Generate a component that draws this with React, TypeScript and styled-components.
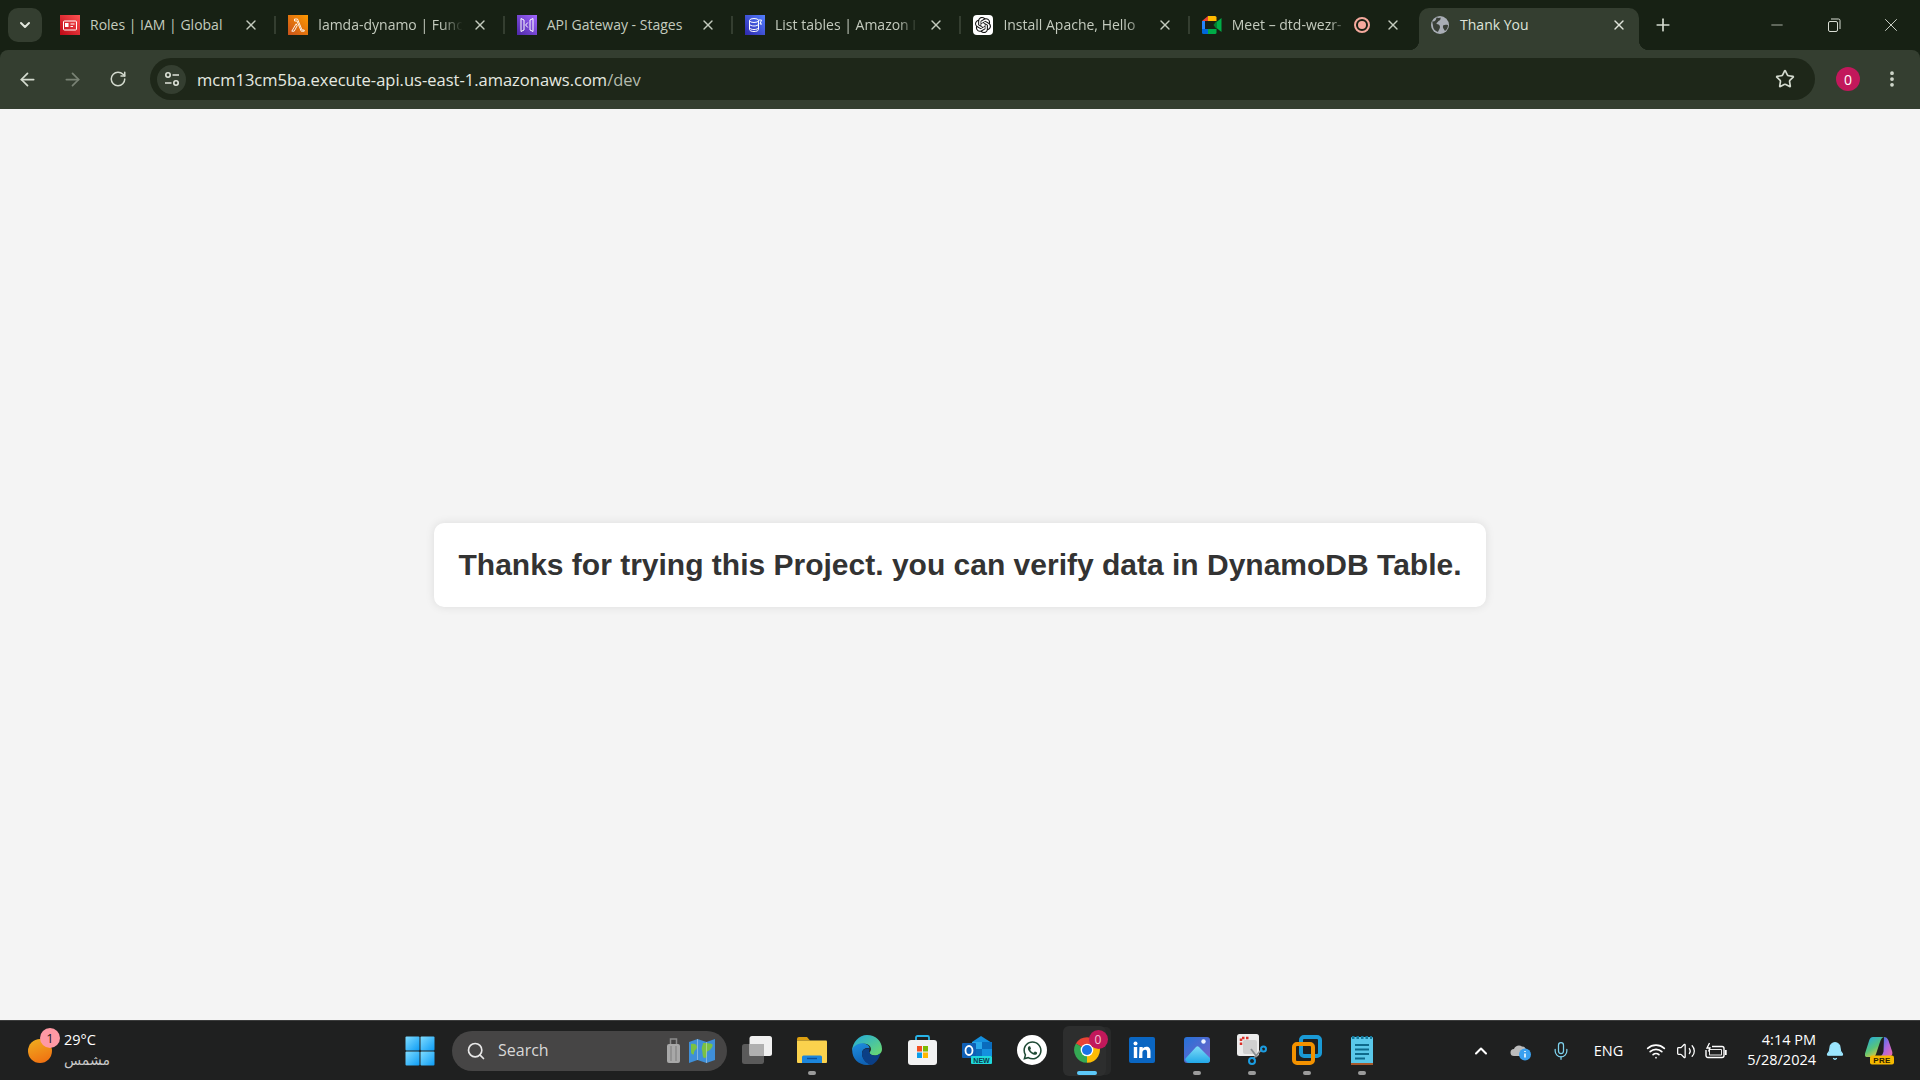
import React from "react";
import styled, { createGlobalStyle } from "styled-components";
import {
  ArrowLeft,
  ArrowRight,
  RotateCw,
  Star,
  EllipsisVertical,
  X,
  Plus,
  Minus,
  ChevronDown,
  ChevronUp,
  Search,
  Mic,
  Wifi,
  Volume2,
  Bell,
} from "lucide-react";
import { SiOpenai } from "react-icons/si";
import { FaWhatsapp } from "react-icons/fa";

const GlobalStyle = createGlobalStyle`
  html, body {
    margin: 0;
    padding: 0;
    background: #f4f4f4;
  }
  * {
    box-sizing: border-box;
  }
`;

const uiFont = `"Open Sans", "Noto Sans", "DejaVu Sans", sans-serif`;

const Screen = styled.div`
  width: 1920px;
  height: 1080px;
  display: flex;
  flex-direction: column;
  overflow: hidden;
  background: #172114;
  font-family: ${uiFont};
`;

const TabStrip = styled.div`
  height: 50px;
  flex: none;
  display: flex;
  background: #172114;
  padding: 8px 0 0 8px;
`;

const TabSearch = styled.div`
  width: 34px;
  height: 34px;
  margin-right: 6px;
  border-radius: 10px;
  background: #343e30;
  color: #e2e7dd;
  display: flex;
  align-items: center;
  justify-content: center;
`;

const Tab = styled.div<{ $active?: boolean }>`
  position: relative;
  flex: none;
  width: ${(p) => (p.$active ? "220px" : "228.35px")};
  margin-left: ${(p) => (p.$active ? "1px" : "0")};
  height: ${(p) => (p.$active ? "42px" : "34px")};
  padding: ${(p) => (p.$active ? "0 12px 8px 11px" : "0 17px 0 12px")};
  display: flex;
  align-items: center;
  border-radius: 10px 10px 0 0;
  background: ${(p) => (p.$active ? "#343e30" : "transparent")};
  color: ${(p) => (p.$active ? "#dfe4da" : "#c4cbbe")};

  ${(p) =>
    p.$active
      ? `
    &::before, &::after {
      content: "";
      position: absolute;
      bottom: 0;
      width: 10px;
      height: 10px;
    }
    &::before {
      left: -10px;
      background: radial-gradient(circle at 0 0, transparent 10px, #343e30 10.5px);
    }
    &::after {
      right: -10px;
      background: radial-gradient(circle at 100% 0, transparent 10px, #343e30 10.5px);
    }
  `
      : ""}
`;

const TabDivider = styled.span`
  position: absolute;
  right: 0;
  top: 8px;
  width: 2px;
  height: 18px;
  background: #343e30;
`;

const Favicon = styled.span`
  width: 20px;
  height: 20px;
  flex: none;
  display: flex;
  align-items: center;
  justify-content: center;
`;

const TabTitle = styled.span<{ $fade?: boolean }>`
  flex: 1;
  min-width: 0;
  margin-left: 10px;
  font-size: 14px;
  line-height: 20px;
  white-space: nowrap;
  ${(p) =>
    p.$fade
      ? `mask-image: linear-gradient(to right, #000 80%, transparent 94%);`
      : ""}
`;

const RecordDot = styled.span`
  width: 16px;
  height: 16px;
  flex: none;
  margin-right: 15px;
  border-radius: 50%;
  border: 2px solid #f5a99d;
  display: flex;
  align-items: center;
  justify-content: center;
  &::after {
    content: "";
    width: 8px;
    height: 8px;
    border-radius: 50%;
    background: #f5a99d;
  }
`;

const TabClose = styled.span`
  width: 16px;
  height: 16px;
  flex: none;
  display: flex;
  align-items: center;
  justify-content: center;
`;

const NewTab = styled.div`
  width: 24px;
  height: 34px;
  margin-left: 12px;
  color: #d5dbd0;
  display: flex;
  align-items: center;
  justify-content: center;
`;

const WindowControls = styled.div`
  margin-left: auto;
  margin-top: -8px;
  padding-right: 1px;
  height: 50px;
  display: flex;
  color: #d8ddd3;
`;

const WindowButton = styled.div`
  width: 57px;
  display: flex;
  align-items: center;
  justify-content: center;
`;

const Toolbar = styled.div`
  height: 59px;
  flex: none;
  display: flex;
  align-items: center;
  padding: 0 0 1px 5px;
  background: #343e30;
  border-radius: 8px 8px 0 0;
`;

const NavButton = styled.div<{ $dim?: boolean }>`
  width: 45px;
  height: 36px;
  display: flex;
  align-items: center;
  justify-content: center;
  color: ${(p) => (p.$dim ? "#798274" : "#d3dace")};
`;

const Omnibox = styled.div`
  width: 1665px;
  height: 42px;
  margin-left: 10px;
  padding: 0 20px 0 7px;
  display: flex;
  align-items: center;
  border-radius: 21px;
  background: #1e2719;
`;

const SiteInfo = styled.div`
  width: 29px;
  height: 29px;
  flex: none;
  border-radius: 50%;
  background: #343e30;
  color: #dfe4da;
  display: flex;
  align-items: center;
  justify-content: center;
`;

const Url = styled.div`
  flex: 1;
  margin-left: 11px;
  font-size: 16.5px;
  color: #e6eae1;
  white-space: nowrap;
`;

const UrlPath = styled.span`
  color: #b4bbae;
`;

const BookmarkStar = styled.div`
  color: #d3dace;
  display: flex;
`;

const Avatar = styled.div`
  width: 24px;
  height: 24px;
  margin-left: 21px;
  flex: none;
  border-radius: 50%;
  background: #c2185b;
  color: #fff;
  font-size: 14px;
  display: flex;
  align-items: center;
  justify-content: center;
`;

const MenuButton = styled.div`
  width: 24px;
  margin-left: 20px;
  color: #d3dace;
  display: flex;
  justify-content: center;
`;

const Page = styled.main`
  flex: 1;
  display: flex;
  align-items: center;
  justify-content: center;
  background: #f4f4f4;
`;

const Card = styled.div`
  width: 1052px;
  height: 84px;
  display: flex;
  align-items: center;
  justify-content: center;
  border-radius: 10px;
  background: #fff;
  box-shadow: 0 0 10px rgba(0, 0, 0, 0.1);
`;

const Message = styled.h1`
  margin: 0;
  font-family: "Liberation Sans", Arial, sans-serif;
  font-size: 30px;
  font-weight: 700;
  color: #333;
  white-space: nowrap;
`;

const Taskbar = styled.footer`
  height: 60px;
  flex: none;
  display: flex;
  align-items: center;
  background: #1f2020;
  border-top: 1px solid #3b3c3c;
  color: #fff;
`;

const Weather = styled.div`
  width: 405px;
  flex: none;
  padding-left: 28px;
  display: flex;
  align-items: center;
`;

const SunIcon = styled.div`
  position: relative;
  width: 24px;
  height: 24px;
  border-radius: 50%;
  background: linear-gradient(160deg, #f0b020, #f06a10);
`;

const CountBadge = styled.span`
  position: absolute;
  top: -11px;
  right: -8px;
  width: 20px;
  height: 20px;
  border-radius: 50%;
  background: #ff99a4;
  color: #1a1a1a;
  font-size: 13px;
  display: flex;
  align-items: center;
  justify-content: center;
`;

const WeatherText = styled.div`
  margin-left: 12px;
  margin-top: -2px;
  display: flex;
  flex-direction: column;
  font-size: 14.5px;
  line-height: 21px;
`;

const WeatherSub = styled.span`
  color: #c9c9c9;
  font-family: "DejaVu Sans", sans-serif;
  font-size: 14px;
`;

const StartButton = styled.div`
  width: 30px;
  height: 30px;
  flex: none;
  display: flex;
`;

const SearchBox = styled.div`
  width: 275px;
  height: 40px;
  flex: none;
  margin-left: 17px;
  padding: 0 11px 0 14px;
  display: flex;
  align-items: center;
  border-radius: 20px;
  background: #464545;
  color: #e8e8e8;
`;

const SearchLabel = styled.span`
  flex: 1;
  margin-left: 12px;
  padding-bottom: 1px;
  font-size: 16px;
  color: #d8d8d8;
`;

const SearchDeco = styled.div`
  display: flex;
  align-items: center;
  gap: 7px;
`;

const AppRow = styled.div`
  margin-left: 2.5px;
  display: flex;
`;

const AppSlot = styled.div<{ $active?: boolean }>`
  position: relative;
  width: 55px;
  height: 58px;
  flex: none;
  padding-bottom: 2px;
  display: flex;
  align-items: center;
  justify-content: center;
  ${(p) =>
    p.$active
      ? `
    &::before {
      content: "";
      position: absolute;
      left: 3px;
      top: 4px;
      width: 43px;
      height: 50px;
      border-radius: 6px;
      background: #2d2e2e;
      box-shadow: 6px 0 0 -1px #282929;
    }
  `
      : ""}
  & > svg {
    position: relative;
  }
`;

const RunDot = styled.span<{ $active?: boolean }>`
  position: absolute;
  bottom: 5px;
  left: 50%;
  transform: translateX(-50%);
  width: ${(p) => (p.$active ? "20px" : "8px")};
  height: 4px;
  border-radius: 2px;
  background: ${(p) => (p.$active ? "#5cc8f8" : "#9b9b9b")};
`;

const AppBadge = styled.span`
  position: absolute;
  top: 8px;
  left: 29px;
  width: 19px;
  height: 19px;
  border-radius: 50%;
  background: #c2185b;
  color: #f3c3d6;
  font-size: 12px;
  display: flex;
  align-items: center;
  justify-content: center;
`;

const Tray = styled.div`
  margin-left: auto;
  padding-right: 14px;
  display: flex;
  align-items: center;
`;

const TraySlot = styled.div<{ $w: number; $color?: string }>`
  width: ${(p) => p.$w}px;
  flex: none;
  display: flex;
  align-items: center;
  justify-content: center;
  color: ${(p) => p.$color || "#fff"};
`;

const LangLabel = styled.span`
  font-size: 14.5px;
  padding-right: 5px;
`;

const Clock = styled.div`
  width: 85px;
  flex: none;
  margin-top: -2px;
  text-align: right;
  font-size: 14.5px;
  line-height: 20px;
  color: #fff;
  white-space: nowrap;
`;

const square = { display: "block" } as const;

const IamIcon = () => (
  <svg width="20" height="20" viewBox="0 0 20 20" style={square}>
    <defs>
      <linearGradient id="iam" x1="0" y1="1" x2="1" y2="0">
        <stop offset="0" stopColor="#bd0816" />
        <stop offset="1" stopColor="#ff5252" />
      </linearGradient>
    </defs>
    <rect width="20" height="20" fill="url(#iam)" />
    <rect x="3.5" y="6" width="13" height="9" rx="1" fill="none" stroke="#fff" strokeWidth="1" />
    <rect x="5" y="8" width="3.5" height="4" fill="#fff" />
    <path d="M10.5 9h4M10.5 11.5h2.5" stroke="#fff" strokeWidth="1" />
  </svg>
);

const LambdaIcon = () => (
  <svg width="20" height="20" viewBox="0 0 20 20" style={square}>
    <defs>
      <linearGradient id="lam" x1="0" y1="1" x2="1" y2="0">
        <stop offset="0" stopColor="#c8511b" />
        <stop offset="1" stopColor="#ff9900" />
      </linearGradient>
    </defs>
    <rect width="20" height="20" fill="url(#lam)" />
    <path d="M6.5 4h3l4.5 11h2.2v1.2h-3L9 6H6.5zM8.2 8.800l1 1.900-3 5.500H3.800z" fill="none" stroke="#fff" strokeWidth="0.9" />
  </svg>
);

const GatewayIcon = () => (
  <svg width="20" height="20" viewBox="0 0 20 20" style={square}>
    <defs>
      <linearGradient id="gw" x1="0" y1="1" x2="1" y2="0">
        <stop offset="0" stopColor="#4d27a8" />
        <stop offset="1" stopColor="#a166ff" />
      </linearGradient>
    </defs>
    <rect width="20" height="20" fill="url(#gw)" />
    <path d="M4 3.5 7 5v10l-3 1.5zM16 3.5 13 5v10l3 1.5z" fill="none" stroke="#fff" strokeWidth="1" />
    <path d="M10.8 7.5 8.6 10l2.2 2.5" fill="none" stroke="#fff" strokeWidth="1" />
  </svg>
);

const DynamoIcon = () => (
  <svg width="20" height="20" viewBox="0 0 20 20" style={square}>
    <defs>
      <linearGradient id="dyn" x1="0" y1="1" x2="1" y2="0">
        <stop offset="0" stopColor="#2e27ad" />
        <stop offset="1" stopColor="#527fff" />
      </linearGradient>
    </defs>
    <rect width="20" height="20" fill="url(#dyn)" />
    <ellipse cx="9" cy="5.5" rx="4.5" ry="2" fill="none" stroke="#fff" strokeWidth="1" />
    <path d="M4.5 5.5v9c0 1.2 2 2 4.5 2s4.5-.8 4.5-2v-9M4.5 9c0 1.2 2 2 4.5 2s4.5-.8 4.5-2M4.5 12.5c0 1.2 2 2 4.5 2s4.5-.8 4.5-2M13.5 5h3l-1.5 4h2" fill="none" stroke="#fff" strokeWidth="1" />
  </svg>
);

const ChatIcon = () => (
  <svg width="20" height="20" viewBox="0 0 20 20" style={square}>
    <rect width="20" height="20" rx="4" fill="#fff" />
    <foreignObject x="2" y="2" width="16" height="16">
      <SiOpenai size={16} color="#111" style={square} />
    </foreignObject>
  </svg>
);

const MeetIcon = () => (
  <svg width="20" height="20" viewBox="0 0 20 20" style={square}>
    <path d="M0 6 6 1v5H0z" fill="#ea4335" />
    <path d="M6 1h7a1.5 1.5 0 0 1 1.5 1.5V6H6z" fill="#ffba00" />
    <path d="M0 6h3v8H0z" fill="#2684fc" />
    <path d="M0 14h6v5H1.5A1.5 1.5 0 0 1 0 17.5z" fill="#0066da" />
    <path d="M6 14h8.5v3.5A1.5 1.5 0 0 1 13 19H6z" fill="#00ac47" />
    <path d="M14.5 6v8l-3-4z" fill="#00832d" />
    <path d="m14.5 7 5-4v14l-5-4z" fill="#00ac47" />
  </svg>
);

const GlobeIcon = () => (
  <svg width="20" height="20" viewBox="0 0 20 20" style={square}>
    <circle cx="10" cy="10" r="9" fill="#a9aeb6" />
    <path d="M3 6.5c2 0 3-1.5 3.5-4 2 .5 3 .5 4 0 .5 1.5-.5 3-2 3.5-1 1.5-2 1.500-2 3 2 0 3.500 1 3.500 3s-1.500 3-2 5c-3-1-5-3-5-6 0-2-1-3-.5-5zM13 10.500c1.500-1 3-1 5-.5 0 2.500-1 4.500-3 6-1-2-2.500-3-2-5.500z" fill="#3a4038" />
  </svg>
);

const TuneIcon = () => (
  <svg width="18" height="18" viewBox="0 0 18 18" fill="none" stroke="currentColor" strokeWidth="1.6" style={square}>
    <circle cx="5" cy="5" r="2.2" />
    <path d="M9.5 5H16M2 13h6.5" />
    <circle cx="13" cy="13" r="2.2" />
  </svg>
);

const RestoreIcon = () => (
  <svg width="16" height="16" viewBox="0 0 16 16" fill="none" stroke="currentColor" strokeWidth="1" style={square}>
    <rect x="2.5" y="4.5" width="9" height="10" rx="1.5" />
    <path d="M5 2h7.5A1.5 1.5 0 0 1 14 3.5V12" />
  </svg>
);

const WindowsLogo = () => (
  <svg width="30" height="30" viewBox="0 0 30 30" style={square}>
    <defs>
      <linearGradient id="win" x1="0" y1="0" x2="1" y2="1">
        <stop offset="0" stopColor="#7fdcff" />
        <stop offset="1" stopColor="#0d9cf5" />
      </linearGradient>
    </defs>
    <rect x="0.5" y="0.5" width="14" height="14" rx="1" fill="url(#win)" />
    <rect x="15.5" y="0.5" width="14" height="14" rx="1" fill="url(#win)" />
    <rect x="0.5" y="15.5" width="14" height="14" rx="1" fill="url(#win)" />
    <rect x="15.5" y="15.5" width="14" height="14" rx="1" fill="url(#win)" />
  </svg>
);

const Suitcase = () => (
  <svg width="15" height="27" viewBox="0 0 15 27" style={square}>
    <path d="M4.5 7V2h6v5" fill="none" stroke="#8c8c8c" strokeWidth="1.5" />
    <rect x="1" y="7" width="13" height="19" rx="2" fill="#a8a8a8" />
    <path d="M5 9v15M10 9v15" stroke="#7c7c7c" />
  </svg>
);

const MapIcon = () => (
  <svg width="28" height="26" viewBox="0 0 28 26" style={square}>
    <path d="M1 4 9.5 1l9 3L27 1v21l-8.5 3-9-3L1 25z" fill="#3f8fd8" />
    <path d="M3 6c3-1 6 0 6 3s-3 3-3 6-3 1-3-1zM15 5c3 0 7 0 9 1s-1 6-4 7 0 6-3 7-2-6-3-8 1-5 1-7z" fill="#7ac143" />
    <path d="M9.5 1v21M18.5 4v21" stroke="#e8e8e8" strokeWidth="0.7" opacity="0.6" />
  </svg>
);

const TaskView = () => (
  <svg width="30" height="28" viewBox="0 0 30 28" style={square}>
    <rect x="0" y="8" width="22" height="20" rx="2.5" fill="#5a5a5a" />
    <rect x="7.5" y="0" width="22.5" height="20" rx="2.5" fill="#f0f0f0" />
    <rect x="7.5" y="8" width="14.5" height="12" fill="#b0b0b0" />
  </svg>
);

const FolderIcon = () => (
  <svg width="30" height="26" viewBox="0 0 30 26" style={square}>
    <path d="M0 2a2 2 0 0 1 2-2h8l3 3.5H0z" fill="#dc9f10" />
    <path d="M0 3.5h29a1 1 0 0 1 1 1V25a1 1 0 0 1-1 1H1a1 1 0 0 1-1-1z" fill="#fbd24d" />
    <path d="M5 20a1.5 1.5 0 0 1 1.5-1.5h17A1.5 1.5 0 0 1 25 20v6H5z" fill="#1c86dc" />
    <path d="M10 21.5h10" stroke="#0c4f9a" strokeWidth="1.4" />
  </svg>
);

const EdgeIcon = () => (
  <svg width="30" height="30" viewBox="0 0 30 30" style={square}>
    <defs>
      <linearGradient id="edge1" x1="0" y1="0" x2="0.3" y2="1">
        <stop offset="0" stopColor="#1f8fe0" />
        <stop offset="1" stopColor="#0f63b5" />
      </linearGradient>
      <linearGradient id="edge2" x1="0" y1="0" x2="1" y2="1">
        <stop offset="0" stopColor="#1fa8e0" />
        <stop offset="1" stopColor="#6fdc6a" />
      </linearGradient>
    </defs>
    <path d="M15 0c8.5 0 15 6 15 14 0 4-3 6.5-7 6.5-3 0-5.500-1-5.500-3 2.500-2 2-7-3-8.500-6-1.500-12.500 2-14.500 7C.5 7 7 0 15 0z" fill="url(#edge2)" />
    <path d="M.2 15c0-3 6-8 12-6.500 4 1 5.500 3 5.300 5-4-1.500-7.500 1-7.500 5 0 5 4 9.500 9 11-1.300.3-2.700.5-4 .5C6.500 30 0 23.500.2 15z" fill="url(#edge1)" />
    <path d="M10 19c0-4 3.500-6.500 7.500-5-.2 1.500-.5 2.500-.1 3.500.5 2 3 3 5.600 3 2 0 4-1 5.500-2.500C27 25 22 29.500 19 30c-5-1.500-9-6-9-11z" fill="#0b3f86" />
  </svg>
);

const StoreIcon = () => (
  <svg width="29" height="30" viewBox="0 0 29 30" style={square}>
    <path d="M8 7V2.5A1.5 1.5 0 0 1 9.5 1h10A1.5 1.5 0 0 1 21 2.500V7" fill="none" stroke="#28b4e8" strokeWidth="1.8" />
    <rect x="0" y="5" width="29" height="25" rx="3" fill="#f2f2f2" />
    <rect x="9" y="11" width="5" height="5.5" fill="#f25022" />
    <rect x="15" y="11" width="5" height="5.5" fill="#7fba00" />
    <rect x="9" y="17.5" width="5" height="5.5" fill="#0a9eea" />
    <rect x="15" y="17.5" width="5" height="5.5" fill="#ffb900" />
  </svg>
);

const OutlookIcon = () => (
  <svg width="30" height="28" viewBox="0 0 30 28" style={square}>
    <path d="M10 6 19 0l11 7v13H10z" fill="#1490df" />
    <path d="M10 6h10v7H10z" fill="#28a8ea" />
    <path d="M20 6h10v7H20zM10 13h10v7H10z" fill="#0a6cbd" />
    <rect x="0" y="7" width="14" height="15" rx="1" fill="#0f5fb5" />
    <ellipse cx="7" cy="14.5" rx="3.5" ry="4.5" fill="none" stroke="#fff" strokeWidth="1.8" />
    <rect x="9" y="20" width="21" height="8" rx="1" fill="#1fd8dc" />
    <text x="19.5" y="26.8" textAnchor="middle" fontFamily="Liberation Sans, sans-serif" fontWeight="700" fontSize="7" fill="#0b3a4a">
      NEW
    </text>
  </svg>
);

const WhatsappIcon = () => (
  <svg width="30" height="30" viewBox="0 0 30 30" style={square}>
    <circle cx="15" cy="15" r="15" fill="#fff" />
    <foreignObject x="4.5" y="4.5" width="21" height="21">
      <FaWhatsapp size={21} color="#1f4a35" style={square} />
    </foreignObject>
  </svg>
);

const ChromeIcon = () => (
  <svg width="28" height="28" viewBox="0 0 24 24" style={square}>
    <path d="M12 12 2.47 6.5A11 11 0 0 1 21.53 6.5z" fill="#ea4335" />
    <path d="M12 12 21.53 6.5A11 11 0 0 1 12 23z" fill="#fbbc04" />
    <path d="M12 12V23A11 11 0 0 1 2.47 6.5z" fill="#34a853" />
    <circle cx="12" cy="12" r="5.4" fill="#fff" />
    <circle cx="12" cy="12" r="4.3" fill="#1a73e8" />
  </svg>
);

const LinkedinIcon = () => (
  <svg width="26" height="26" viewBox="0 0 26 26" style={square}>
    <rect width="26" height="26" rx="2" fill="#0a66c2" />
    <circle cx="6.5" cy="6.5" r="2" fill="#fff" />
    <path d="M4.8 10h3.4v11H4.8zM10.5 10h3.2v1.6c.6-1 1.8-1.9 3.5-1.9 3.3 0 4.3 2 4.3 5V21h-3.4v-5.6c0-1.5-.4-2.7-1.9-2.7-1.6 0-2.8 1-2.8 2.9V21h-3.4z" fill="#fff" />
  </svg>
);

const PhotosIcon = () => (
  <svg width="26" height="26" viewBox="0 0 26 26" style={square}>
    <defs>
      <linearGradient id="ph" x1="0" y1="0" x2="1" y2="1">
        <stop offset="0" stopColor="#2472d8" />
        <stop offset="1" stopColor="#7a62c8" />
      </linearGradient>
      <linearGradient id="ph2" x1="0" y1="0" x2="0" y2="1">
        <stop offset="0" stopColor="#7fdcf8" />
        <stop offset="1" stopColor="#22a8e8" />
      </linearGradient>
    </defs>
    <rect width="26" height="26" rx="3" fill="url(#ph)" />
    <circle cx="19.5" cy="4.5" r="2.2" fill="#eef4ff" />
    <path d="M2 24c-1-1-1-2 0-3L12 10c1-1 2-1 3 0l11 11v2a3 3 0 0 1-3 3H5c-1 0-2-1-3-2z" fill="url(#ph2)" />
  </svg>
);

const SnipIcon = () => (
  <svg width="30" height="31" viewBox="0 0 30 31" style={square}>
    <rect x="0" y="0" width="22" height="22" rx="2.5" fill="#ececec" />
    <path d="M4 11V4h8" stroke="#d9302a" strokeWidth="2.5" strokeDasharray="2.5 1.5" fill="none" />
    <rect x="6" y="6" width="14" height="14" rx="2" fill="#d0d0d0" />
    <path d="m14 15 6 8M25 15l-9 10" stroke="#8a8f92" strokeWidth="1.8" />
    <circle cx="26.5" cy="15" r="2.5" fill="none" stroke="#1b9de2" strokeWidth="2" />
    <circle cx="15" cy="27" r="3" fill="none" stroke="#1b9de2" strokeWidth="2" />
  </svg>
);

const VmwareIcon = () => (
  <svg width="30" height="30" viewBox="0 0 30 30" style={square}>
    <rect x="9" y="2" width="19" height="19" rx="3" fill="none" stroke="#1a9ad6" strokeWidth="4" />
    <rect x="2" y="9" width="19" height="19" rx="3" fill="none" stroke="#f39200" strokeWidth="4" />
  </svg>
);

const NotepadIcon = () => (
  <svg width="22" height="30" viewBox="0 0 22 30" style={square}>
    <rect x="0" y="2" width="22" height="28" rx="1" fill="#5ac8ea" />
    <path d="M0 28h22v2H0z" fill="#a8592c" />
    <path d="M1 2.5h20" stroke="#157a9e" strokeWidth="3" strokeDasharray="2.5 2" />
    <path d="M4 10h14M4 14.5h14M4 19h14M4 23.5h10" stroke="#0e6a8c" strokeWidth="1.8" />
  </svg>
);

const CloudInfo = () => (
  <svg width="22" height="20" viewBox="0 0 22 20" style={square}>
    <path d="M4 15a3.5 3.5 0 0 1 0-7c1-3 5-4.500 8-2.500 3 0 4 2 4 4L12 15z" fill="#bcbcbc" />
    <circle cx="15" cy="13.5" r="6" fill="#3aa0f0" />
    <path d="M15 12.5v4M15 10v1" stroke="#fff" strokeWidth="1.5" />
  </svg>
);

const BatteryIcon = () => (
  <svg width="22" height="18" viewBox="0 0 22 18" fill="none" stroke="#fff" strokeWidth="1.4" style={square}>
    <path d="M7 4.5h10a2 2 0 0 1 2 2v7a2 2 0 0 1-2 2H3a2 2 0 0 1-2-2V8" />
    <path d="M20.8 8v5" strokeWidth="1.8" />
    <path d="M4.5 1 2 6h3l-1.5 3.5" strokeWidth="1.3" />
    <rect x="4" y="7" width="13" height="6.5" rx="0.8" fill="#fff" stroke="none" opacity="0.9" />
    <rect x="5" y="8" width="11" height="4.5" fill="#1f2020" stroke="none" />
  </svg>
);

const CopilotIcon = () => (
  <svg width="30" height="29" viewBox="0 0 30 29" style={square}>
    <defs>
      <linearGradient id="cp1" x1="0" y1="0" x2="0.6" y2="1">
        <stop offset="0" stopColor="#1fa8e8" />
        <stop offset="0.6" stopColor="#58c47a" />
        <stop offset="1" stopColor="#e8c93a" />
      </linearGradient>
      <linearGradient id="cp2" x1="0" y1="0" x2="1" y2="1">
        <stop offset="0" stopColor="#2a7ae0" />
        <stop offset="0.5" stopColor="#a868e0" />
        <stop offset="1" stopColor="#f06aa8" />
      </linearGradient>
    </defs>
    <path d="M8 1h11c-2 .5-3 2-4 5l-4 12c-.5 2-2 3-4 3H2c-2 0-2.500-2-2-3.500L4 5c.7-2.500 2-4 4-4z" fill="url(#cp1)" />
    <path d="M19 1c2 0 3.500 1 4.500 3.500L27 15c1 3 0 5-2 5h-9c1.500-1 2-3 2.500-4.500z" fill="url(#cp2)" />
    <rect x="5" y="19.5" width="24" height="9" rx="2" fill="#f5b800" />
    <text x="17" y="27" textAnchor="middle" fontFamily="Liberation Sans, sans-serif" fontWeight="700" fontSize="8" letterSpacing="0.4" fill="#2a2000">
      PRE
    </text>
  </svg>
);

const tabs: { title: string; icon: React.ReactNode; fade?: boolean; record?: boolean }[] = [
  { title: "Roles | IAM | Global", icon: <IamIcon /> },
  { title: "lamda-dynamo | Func", icon: <LambdaIcon />, fade: true },
  { title: "API Gateway - Stages", icon: <GatewayIcon /> },
  { title: "List tables | Amazon I", icon: <DynamoIcon />, fade: true },
  { title: "Install Apache, Hello", icon: <ChatIcon />, fade: true },
  { title: "Meet – dtd-wezr-", icon: <MeetIcon />, fade: true, record: true },
];

const apps: { icon: React.ReactNode; running?: boolean; active?: boolean; badge?: string }[] = [
  { icon: <TaskView /> },
  { icon: <FolderIcon />, running: true },
  { icon: <EdgeIcon /> },
  { icon: <StoreIcon /> },
  { icon: <OutlookIcon /> },
  { icon: <WhatsappIcon /> },
  { icon: <ChromeIcon />, active: true, badge: "0" },
  { icon: <LinkedinIcon /> },
  { icon: <PhotosIcon />, running: true },
  { icon: <SnipIcon />, running: true },
  { icon: <VmwareIcon />, running: true },
  { icon: <NotepadIcon />, running: true },
];

const App = () => {
  return (
    <Screen>
      <GlobalStyle />
      <TabStrip>
        <TabSearch>
          <ChevronDown size={16} strokeWidth={3} />
        </TabSearch>
        {tabs.map((tab, i) => (
          <Tab key={tab.title}>
            <Favicon>{tab.icon}</Favicon>
            <TabTitle $fade={tab.fade}>{tab.title}</TabTitle>
            {tab.record && <RecordDot />}
            <TabClose>
              <X size={16} strokeWidth={2} />
            </TabClose>
            {i < tabs.length - 1 && <TabDivider />}
          </Tab>
        ))}
        <Tab $active>
          <Favicon>
            <GlobeIcon />
          </Favicon>
          <TabTitle>Thank You</TabTitle>
          <TabClose>
            <X size={16} strokeWidth={2} />
          </TabClose>
        </Tab>
        <NewTab>
          <Plus size={20} strokeWidth={2} />
        </NewTab>
        <WindowControls>
          <WindowButton>
            <Minus size={18} strokeWidth={1} />
          </WindowButton>
          <WindowButton>
            <RestoreIcon />
          </WindowButton>
          <WindowButton>
            <X size={22} strokeWidth={1} />
          </WindowButton>
        </WindowControls>
      </TabStrip>
      <Toolbar>
        <NavButton>
          <ArrowLeft size={21} strokeWidth={2} />
        </NavButton>
        <NavButton $dim>
          <ArrowRight size={21} strokeWidth={2} />
        </NavButton>
        <NavButton>
          <RotateCw size={18} strokeWidth={2} />
        </NavButton>
        <Omnibox>
          <SiteInfo>
            <TuneIcon />
          </SiteInfo>
          <Url>
            mcm13cm5ba.execute-api.us-east-1.amazonaws.com<UrlPath>/dev</UrlPath>
          </Url>
          <BookmarkStar>
            <Star size={20} strokeWidth={2} />
          </BookmarkStar>
        </Omnibox>
        <Avatar>0</Avatar>
        <MenuButton>
          <EllipsisVertical size={20} strokeWidth={2.5} />
        </MenuButton>
      </Toolbar>
      <Page>
        <Card>
          <Message>Thanks for trying this Project. you can verify data in DynamoDB Table.</Message>
        </Card>
      </Page>
      <Taskbar>
        <Weather>
          <SunIcon>
            <CountBadge>1</CountBadge>
          </SunIcon>
          <WeatherText>
            <span>29°C</span>
            <WeatherSub>مشمس</WeatherSub>
          </WeatherText>
        </Weather>
        <StartButton>
          <WindowsLogo />
        </StartButton>
        <SearchBox>
          <Search size={20} strokeWidth={2} />
          <SearchLabel>Search</SearchLabel>
          <SearchDeco>
            <Suitcase />
            <MapIcon />
          </SearchDeco>
        </SearchBox>
        <AppRow>
          {apps.map((app, i) => (
            <AppSlot key={i} $active={app.active}>
              {app.icon}
              {app.badge && <AppBadge>{app.badge}</AppBadge>}
              {(app.running || app.active) && <RunDot $active={app.active} />}
            </AppSlot>
          ))}
        </AppRow>
        <Tray>
          <TraySlot $w={40}>
            <ChevronUp size={20} strokeWidth={2.5} />
          </TraySlot>
          <TraySlot $w={40}>
            <CloudInfo />
          </TraySlot>
          <TraySlot $w={40} $color="#7fd3ef">
            <Mic size={20} strokeWidth={1.5} />
          </TraySlot>
          <TraySlot $w={60}>
            <LangLabel>ENG</LangLabel>
          </TraySlot>
          <TraySlot $w={30}>
            <Wifi size={20} strokeWidth={2} />
          </TraySlot>
          <TraySlot $w={30}>
            <Volume2 size={20} strokeWidth={1.5} />
          </TraySlot>
          <TraySlot $w={30}>
            <BatteryIcon />
          </TraySlot>
          <Clock>
            <div>4:14 PM</div>
            <div>5/28/2024</div>
          </Clock>
          <TraySlot $w={38} $color="#9be6ff">
            <Bell size={20} fill="#9be6ff" strokeWidth={1.5} />
          </TraySlot>
          <TraySlot $w={52}>
            <CopilotIcon />
          </TraySlot>
        </Tray>
      </Taskbar>
    </Screen>
  );
};

export default App;
